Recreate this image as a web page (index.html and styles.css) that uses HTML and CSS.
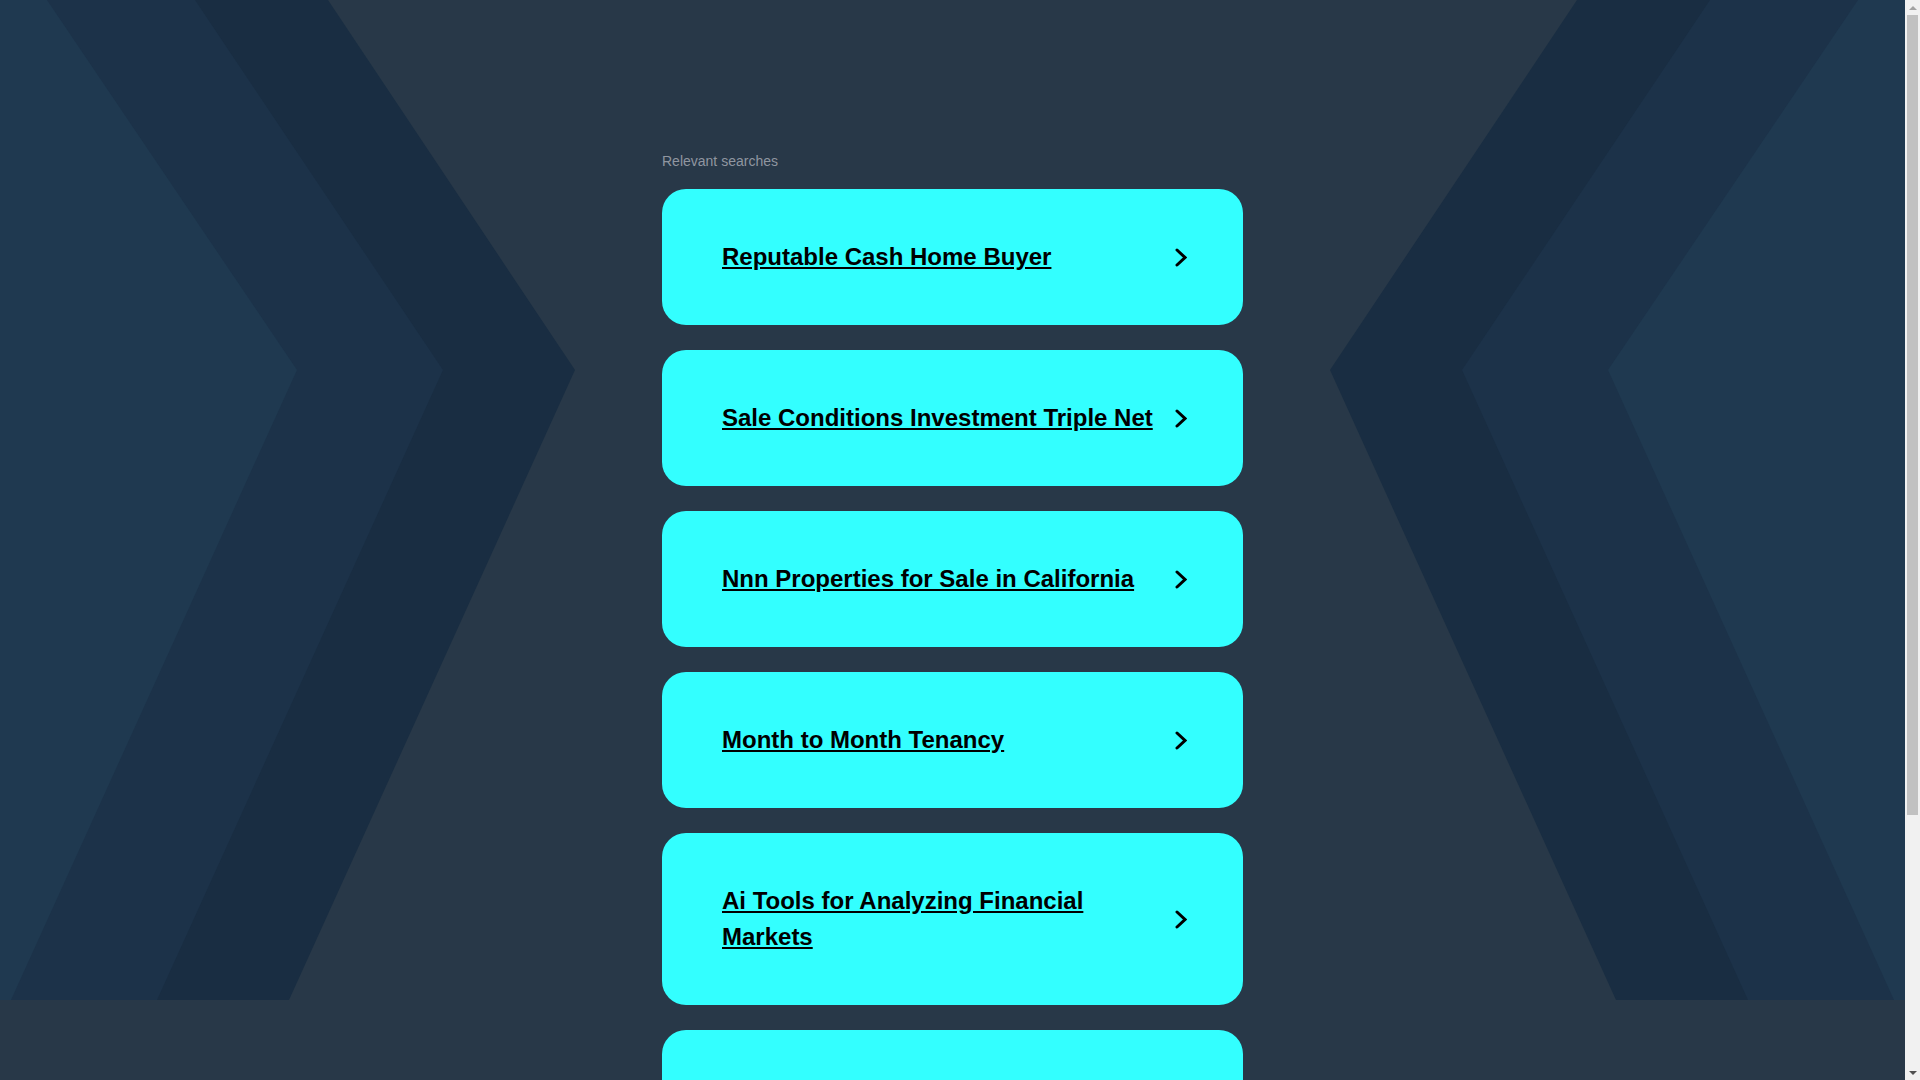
FILE: index.html
```html
<!DOCTYPE html>
<html lang="en">
<head>
<meta charset="utf-8">
<title>Relevant searches</title>
<link rel="stylesheet" href="styles.css">
</head>
<body>
<div class="page">
  <svg class="bg" viewBox="0 0 1905 1000" preserveAspectRatio="none" aria-hidden="true">
    <defs>
      <g id="chev">
        <polygon points="0,0 328,0 575,370 289,1000 0,1000" fill="#192d42"/>
        <polygon points="0,0 195,0 443,370 157,1000 0,1000" fill="#1c3249"/>
        <polygon points="0,0 47,0 297,370 11,1000 0,1000" fill="#1f3950"/>
      </g>
    </defs>
    <use href="#chev"/>
    <g transform="translate(1905,0) scale(-1,1)">
      <use href="#chev"/>
    </g>
  </svg>
  <main class="content">
    <div class="label">Relevant searches</div>
    <ul class="list">
      <li class="card"><a class="link" href="#">Reputable Cash Home Buyer</a><svg class="arrow" viewBox="0 0 12 19"><path d="M2 2 L10 9.5 L2 17"/></svg></li>
      <li class="card"><a class="link" href="#">Sale Conditions Investment Triple Net</a><svg class="arrow" viewBox="0 0 12 19"><path d="M2 2 L10 9.5 L2 17"/></svg></li>
      <li class="card"><a class="link" href="#">Nnn Properties for Sale in California</a><svg class="arrow" viewBox="0 0 12 19"><path d="M2 2 L10 9.5 L2 17"/></svg></li>
      <li class="card"><a class="link" href="#">Month to Month Tenancy</a><svg class="arrow" viewBox="0 0 12 19"><path d="M2 2 L10 9.5 L2 17"/></svg></li>
      <li class="card"><a class="link" href="#">Ai Tools for Analyzing Financial Markets</a><svg class="arrow" viewBox="0 0 12 19"><path d="M2 2 L10 9.5 L2 17"/></svg></li>
      <li class="card card-last"><a class="link" href="#">Commercial Property Listings</a><svg class="arrow" viewBox="0 0 12 19"><path d="M2 2 L10 9.5 L2 17"/></svg></li>
    </ul>
  </main>
</div>
<div class="scrollbar" aria-hidden="true">
  <div class="sb-up"></div>
  <div class="sb-track"><div class="sb-thumb"></div></div>
  <div class="sb-down"></div>
</div>
</body>
</html>
```

FILE: styles.css
```css
html, body {
  margin: 0;
  padding: 0;
}
body {
  background: #283848;
  font-family: "Liberation Sans", Arial, sans-serif;
  overflow-x: hidden;
}
.page {
  position: relative;
  width: calc(100% - 15px);
  min-height: 100vh;
}
.bg {
  position: absolute;
  top: 0;
  left: 0;
  width: 100%;
  height: 1000px;
  z-index: 0;
  display: block;
}
.content {
  position: relative;
  z-index: 1;
  width: 581px;
  margin: 0 auto;
  padding: 153px 0 40px;
}
.label {
  font-size: 14px;
  line-height: 16px;
  color: #9096a0;
  margin-bottom: 20px;
}
.list {
  list-style: none;
  margin: 0;
  padding: 0;
}
.card {
  display: flex;
  align-items: center;
  background: #33ffff;
  border-radius: 24px;
  padding: 50px 56px 50px 60px;
  margin-bottom: 25px;
}
.link {
  flex: 1;
  font-size: 24px;
  line-height: 36px;
  font-weight: bold;
  color: #000;
  text-decoration: underline;
}
.arrow {
  flex: none;
  width: 12px;
  height: 19px;
  margin-left: 14px;
  fill: none;
  stroke: #000;
  stroke-width: 3;
  stroke-linecap: round;
  stroke-linejoin: miter;
}
.scrollbar {
  position: fixed;
  top: 0;
  right: 0;
  width: 15px;
  height: 100vh;
  background: #f1f1f1;
  display: flex;
  flex-direction: column;
  z-index: 5;
}
.sb-up, .sb-down {
  flex: none;
  height: 15px;
  display: flex;
  align-items: center;
  justify-content: center;
}
.sb-up::before {
  content: "";
  width: 0;
  height: 0;
  border-left: 4px solid transparent;
  border-right: 4px solid transparent;
  border-bottom: 4px solid #a3a3a3;
}
.sb-down::before {
  content: "";
  width: 0;
  height: 0;
  border-left: 4px solid transparent;
  border-right: 4px solid transparent;
  border-top: 4px solid #505050;
}
.sb-track {
  flex: 1;
  padding: 0 2px;
}
.sb-thumb {
  height: 800px;
  background: #c1c1c1;
}
```
